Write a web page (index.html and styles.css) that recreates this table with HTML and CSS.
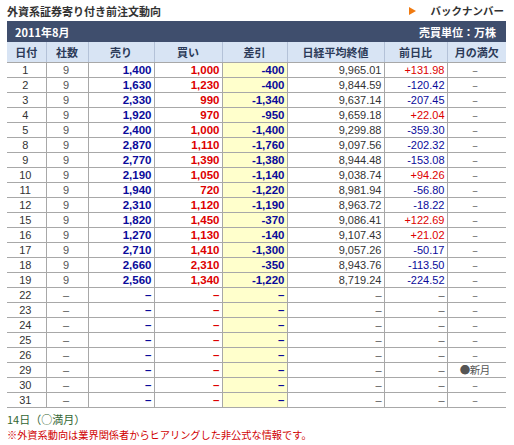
FILE: index.html
```html
<!DOCTYPE html>
<html lang="ja">
<head>
<meta charset="utf-8">
<link rel="stylesheet" href="styles.css">
</head>
<body>
<div class="wrap">
  <div class="top">
    <h1 class="title">外資系証券寄り付き前注文動向</h1>
    <a class="back"><span class="tri"></span>バックナンバー</a>
  </div>
  <div class="bar">
    <span class="month">2011年8月</span>
    <span class="unit">売買単位：万株</span>
  </div>
  <table class="grid">
    <colgroup>
      <col class="w39"><col class="w42"><col class="w66"><col class="w68"><col class="w65"><col class="w97"><col class="w63"><col class="w59">
    </colgroup>
    <thead>
      <tr><th>日付</th><th>社数</th><th>売り</th><th>買い</th><th>差引</th><th>日経平均終値</th><th>前日比</th><th>月の満欠</th></tr>
    </thead>
    <tbody id="rows"></tbody>
  </table>
  <p class="moon">14日（○満月）</p>
  <p class="note">※外資系動向は業界関係者からヒアリングした非公式な情報です。</p>
</div>
<script src="app.js"></script>
</body>
</html>
```

FILE: app.js
```js
var D = "\u2013";
var data = [
  ["1","9","1,400","1,000","-400","9,965.01","+131.98",D],
  ["2","9","1,630","1,230","-400","9,844.59","-120.42",D],
  ["3","9","2,330","990","-1,340","9,637.14","-207.45",D],
  ["4","9","1,920","970","-950","9,659.18","+22.04",D],
  ["5","9","2,400","1,000","-1,400","9,299.88","-359.30",D],
  ["8","9","2,870","1,110","-1,760","9,097.56","-202.32",D],
  ["9","9","2,770","1,390","-1,380","8,944.48","-153.08",D],
  ["10","9","2,190","1,050","-1,140","9,038.74","+94.26",D],
  ["11","9","1,940","720","-1,220","8,981.94","-56.80",D],
  ["12","9","2,310","1,120","-1,190","8,963.72","-18.22",D],
  ["15","9","1,820","1,450","-370","9,086.41","+122.69",D],
  ["16","9","1,270","1,130","-140","9,107.43","+21.02",D],
  ["17","9","2,710","1,410","-1,300","9,057.26","-50.17",D],
  ["18","9","2,660","2,310","-350","8,943.76","-113.50",D],
  ["19","9","2,560","1,340","-1,220","8,719.24","-224.52",D],
  ["22",D,D,D,D,D,D,D],
  ["23",D,D,D,D,D,D,D],
  ["24",D,D,D,D,D,D,D],
  ["25",D,D,D,D,D,D,D],
  ["26",D,D,D,D,D,D,D],
  ["29",D,D,D,D,D,D,"●新月"],
  ["30",D,D,D,D,D,D,D],
  ["31",D,D,D,D,D,D,D]
];
var cls = ["c-day","c-cnt","c-sell","c-buy","c-diff","c-nk","c-chg","c-moon"];
var tb = document.getElementById("rows");
data.forEach(function (r) {
  var tr = document.createElement("tr");
  r.forEach(function (v, i) {
    var td = document.createElement("td");
    td.className = cls[i];
    if (i === 6 && v !== D) td.className += v.charAt(0) === "+" ? " up" : " down";
    if ((i === 5 || i === 6) && v === D) td.className += " dash";
    td.textContent = v;
    tr.appendChild(td);
  });
  tb.appendChild(tr);
});
```

FILE: styles.css
```css
html, body { margin: 0; padding: 0; background: #fff; }
body { font-family: "Liberation Sans", "Noto Sans CJK JP", sans-serif; color: #333; }
.wrap { width: 499px; padding: 0 0 0 7px; }
.top { display: flex; justify-content: space-between; align-items: center; height: 21px; }
.title { margin: 0; font: bold 11px/13px "Noto Sans CJK JP", sans-serif; color: #333; padding-top: 1px; }
.back { display: flex; align-items: center; font: bold 10.5px/13px "Noto Sans CJK JP", sans-serif; color: #333; margin-right: 2px; }
.tri { width: 0; height: 0; border-left: 7px solid #f07a10; border-top: 4px solid transparent; border-bottom: 4px solid transparent; margin-right: 15px; }
.bar { height: 21px; background: #3f4e6d; color: #fff; display: flex; justify-content: space-between; align-items: center; padding: 0 10px 0 8px; font: bold 11px "Noto Sans CJK JP", sans-serif; }
.grid { border-collapse: collapse; table-layout: fixed; width: 499px; }
.w39 { width: 39px; } .w42 { width: 42px; } .w66 { width: 66px; } .w68 { width: 68px; }
.w65 { width: 65px; } .w97 { width: 97px; } .w63 { width: 63px; } .w59 { width: 59px; }
.grid th { height: 20px; padding: 0; background: #d8e4f4; color: #2b3a58; font: bold 11px "Noto Sans CJK JP", sans-serif; border-left: 1px solid #b4c2d8; border-bottom: 1px solid #a8a8a8; }
.grid th:first-child { border-left: none; }
.grid td { height: 14px; padding: 0 2px 0 0; font-size: 11px; line-height: 14px; border-left: 1px solid #a8a8a8; border-bottom: 1px solid #a8a8a8; white-space: nowrap; }
.grid td:first-child { border-left: none; }
.c-day, .c-cnt, .c-moon { text-align: center; }
.c-cnt, .c-moon { color: #555; }
.grid td.c-moon { font-family: "Noto Sans CJK JP", sans-serif; font-size: 10.5px; padding: 0 4px 0 0; letter-spacing: -0.5px; overflow: hidden; }
.c-sell, .c-buy, .c-diff { text-align: right; font-weight: bold; font-size: 11.5px !important; }
.c-sell { color: #0a0a9a; }
.c-buy { color: #dd0000; }
.c-diff { color: #0a0a9a; background: #ffffcc; }
.c-nk, .c-chg { text-align: right; }
.up { color: #dd0000; }
.down { color: #0a0a9a; }
.dash { color: #555; }
.moon { margin: 4px 0 0; font: 11px/14px "Noto Sans CJK JP", sans-serif; color: #336633; }
.note { margin: 1px 0 0; font: 10.2px/15px "Noto Sans CJK JP", sans-serif; color: #d00000; }
```
